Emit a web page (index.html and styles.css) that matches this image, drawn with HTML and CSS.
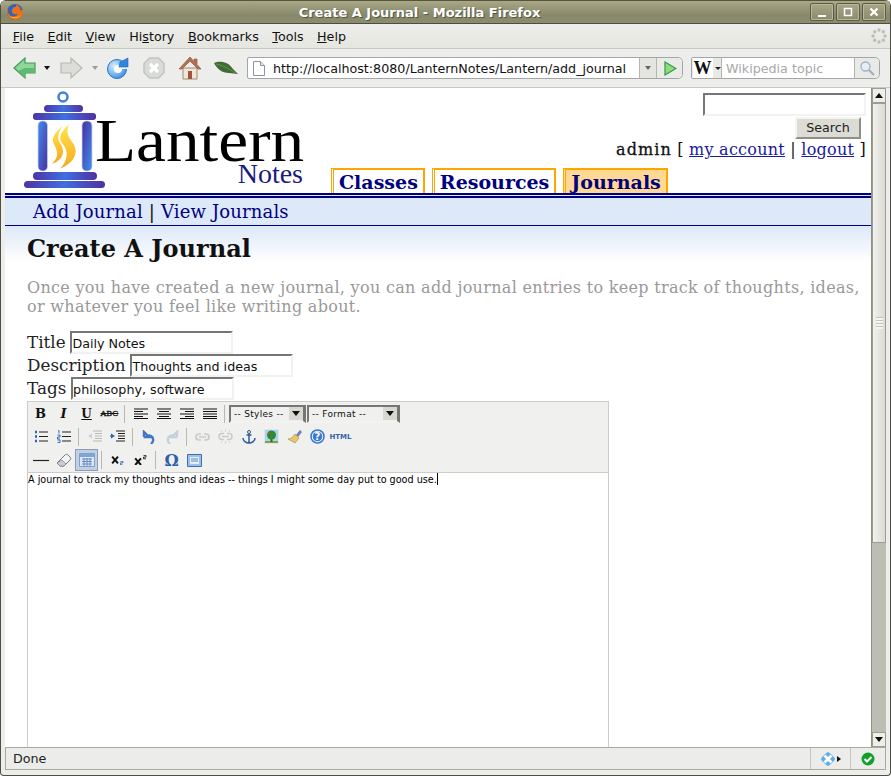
FILE: index.html
```html
<!doctype html>
<html>
<head>
    <meta charset="UTF-8">
    <title>Create A Journal - Mozilla Firefox</title>
    <link rel="stylesheet" href="styles.css">
</head>
<body>
<svg width="0" height="0" class="defs">
    <defs>
        <linearGradient id="lampA" x1="0" y1="0" x2="1" y2="1">
            <stop offset="0" stop-color="#3f8ff0"/><stop offset="1" stop-color="#4a2f9c"/>
        </linearGradient>
        <linearGradient id="lampC" x1="0" y1="0" x2="1" y2="1">
            <stop offset="0" stop-color="#4a2f9c"/><stop offset="1" stop-color="#3f8ff0"/>
        </linearGradient>
        <linearGradient id="lampB" x1="0" y1="0" x2="1" y2="0">
            <stop offset="0" stop-color="#4d35a5"/><stop offset="0.5" stop-color="#3f6fe0"/><stop offset="1" stop-color="#51309f"/>
        </linearGradient>
        <linearGradient id="flame" x1="0" y1="0" x2="0" y2="1">
            <stop offset="0" stop-color="#ffe64d"/><stop offset="1" stop-color="#f7a71e"/>
        </linearGradient>
        <radialGradient id="reloadFill" cx="0.35" cy="0.35" r="0.8">
            <stop offset="0" stop-color="#d8effc"/><stop offset="1" stop-color="#2a83dd"/>
        </radialGradient>
    </defs>
</svg>
<div class="window">
    <div class="titlebar">
        <svg class="ff-logo" width="18" height="18" viewBox="0 0 18 18">
            <circle cx="9" cy="9" r="8" fill="#3a62b0"/>
            <circle cx="10" cy="7.500" r="3.500" fill="#7fa3dc"/>
            <path d="M2 4C0 8 1 13 4.500 15.500c4 2.500 9 1.500 11.500-2 1.500-2.500 1.500-5 .5-7.500-.5 1-1 1.500-2 1.500.3-2.500-1.500-5-4.500-6 1 2-.5 3-2 3.500-1.500.5-2.500 2-2 4 .6 2 3.500 3 6 1.500-1 3-6 4-8.500 1.500C1.500 10 1.500 7 2 4z" fill="#e8721a"/>
            <path d="M3.500 13c3 3.500 9 3 11.500-1-3 2.500-8 3-11.500 1z" fill="#f6b52a"/>
        </svg>
        <div class="title-text">Create A Journal - Mozilla Firefox</div>
        <div class="win-btns">
            <div class="win-btn"><svg width="12" height="12" viewBox="0 0 12 12"><path d="M2 10h8" stroke="#fff" stroke-width="2"/></svg></div>
            <div class="win-btn"><svg width="12" height="12" viewBox="0 0 12 12"><path d="M2.500 2.500h7v7h-7z" fill="none" stroke="#fff" stroke-width="1.500"/></svg></div>
            <div class="win-btn"><svg width="12" height="12" viewBox="0 0 12 12"><path d="M2.500 2.500l7 7M9.500 2.500l-7 7" stroke="#fff" stroke-width="2.200"/></svg></div>
        </div>
    </div>

    <div class="chrome">
        <div class="menubar">
            <span class="menu-item"><u>F</u>ile</span>
            <span class="menu-item"><u>E</u>dit</span>
            <span class="menu-item"><u>V</u>iew</span>
            <span class="menu-item">Hi<u>s</u>tory</span>
            <span class="menu-item"><u>B</u>ookmarks</span>
            <span class="menu-item"><u>T</u>ools</span>
            <span class="menu-item"><u>H</u>elp</span>
            <svg class="throbber" width="16" height="16" viewBox="0 0 16 16" fill="#bdbdb8">
                <circle cx="8" cy="2" r="1.700"/><circle cx="12.300" cy="3.700" r="1.700"/><circle cx="14" cy="8" r="1.700"/><circle cx="12.300" cy="12.300" r="1.700"/><circle cx="8" cy="14" r="1.700"/><circle cx="3.700" cy="12.300" r="1.700"/><circle cx="2" cy="8" r="1.700"/><circle cx="3.700" cy="3.700" r="1.700"/>
            </svg>
        </div>
        <div class="navbar">
            <svg class="nav-icon back" width="24" height="24" viewBox="0 0 24 24"><path d="M1 12L12 2v5h10v10H12v5z" fill="#8fd69a" stroke="#3c9a55" stroke-width="1.200"/><path d="M12 12h10v5H12v5L5 15z" fill="#5fb96f"/></svg>
            <span class="drop-arrow"></span>
            <svg class="nav-icon fwd" width="24" height="24" viewBox="0 0 24 24"><path d="M23 12L12 2v5H2v10h10v5z" fill="#dcdcd8" stroke="#b9b9b4" stroke-width="1.200"/></svg>
            <span class="drop-arrow off"></span>
            <svg class="nav-icon reload" width="24" height="24" viewBox="0 0 24 24"><circle cx="11" cy="13" r="9.500" fill="url(#reloadFill)" stroke="#2a73c8"/><circle cx="12" cy="13" r="4" fill="#fff"/><path d="M13 13h9V11h-9z" fill="#eef3f6"/><path d="M14 6l8-4v9h-9z" fill="#2f86dd" stroke="#1e66b8" stroke-width=".6"/></svg>
            <svg class="nav-icon stop" width="24" height="24" viewBox="0 0 24 24"><path d="M7.500 2h9L22 7.500v9L16.500 22h-9L2 16.500v-9z" fill="#d9dbd8" stroke="#c2c4c0" stroke-width="1.500"/><path d="M8 8l8 8M16 8l-8 8" stroke="#fff" stroke-width="3.200"/></svg>
            <svg class="nav-icon home" width="24" height="24" viewBox="0 0 24 24"><path d="M5 12h14v11H5z" fill="#f1e7d8" stroke="#9d8a74"/><path d="M12 1L1 13h3l8-8 8 8h3l-4-4.500V3h-3v2.500z" fill="#b5704f" stroke="#8a5a45" stroke-width=".7"/><path d="M10 15h4v8h-4z" fill="#a5523c"/></svg>
            <svg class="nav-icon leaf" width="26" height="14" viewBox="0 0 26 14"><path d="M1 2c6-3 15-1 19 6l5 5c-3 0-6-1-9-1C9 12 4 8 1 2z" fill="#3f6b34"/><path d="M3 3c6 1 12 4 19 9" stroke="#7f9f60" stroke-width=".7" fill="none"/></svg>
            <div class="urlbar">
                <svg class="page-icon" width="12" height="15" viewBox="0 0 12 15"><path d="M.5.500h7l4 4v10H.5z" fill="#fff" stroke="#8b93a8"/><path d="M7.500.500v4h4" fill="#dfe3ea" stroke="#8b93a8"/></svg>
                <span class="url-text">http://localhost:8080/LanternNotes/Lantern/add_journal</span>
                <span class="url-drop"><span class="drop-arrow grey"></span></span>
                <span class="url-go"><svg width="14" height="15" viewBox="0 0 14 15"><path d="M2 1l11 6.500L2 14z" fill="#8fdc7c" stroke="#2f9a48" stroke-width="1.200"/></svg></span>
            </div>
            <div class="searchbar">
                <span class="engine"><b class="engine-w">W</b><span class="drop-arrow small"></span></span>
                <span class="engine-text">Wikipedia topic</span>
                <span class="engine-go"><svg width="16" height="16" viewBox="0 0 16 16"><circle cx="6.500" cy="6.500" r="4.500" fill="#e3eef6" stroke="#9fb2c2" stroke-width="1.300"/><path d="M10 10l5 5" stroke="#a9adb1" stroke-width="2.200"/></svg></span>
            </div>
        </div>
    </div>

    <div class="viewport">
        <div class="page">
            <div class="header">
                <div class="logo">
                    <svg class="lamp" width="82" height="98" viewBox="0 0 82 98">
                        <circle cx="39" cy="6" r="4.500" fill="#fff" stroke="#3f7fe0" stroke-width="2.500"/>
                        <rect x="20" y="14" width="39" height="7" rx="3.500" fill="url(#lampB)"/>
                        <rect x="9" y="22" width="63" height="7" rx="3" fill="url(#lampB)"/>
                        <rect x="14" y="30" width="9.500" height="50" rx="4.500" fill="url(#lampA)" stroke="#c9cfe8" stroke-width=".8"/>
                        <rect x="58" y="30" width="10" height="50" rx="4.500" fill="url(#lampC)" stroke="#c9cfe8" stroke-width=".8"/>
                        <g transform="translate(-24,-3) scale(.3333)" fill="url(#flame)">
                            <path d="M190 112C165 135 150 150 165 175 175 195 175 210 155 228 195 215 195 185 180 165 170 150 175 130 190 112z"/>
                            <path d="M207 108C185 130 170 150 190 170 205 190 205 215 180 242 225 225 240 190 215 160 200 140 200 125 207 108z"/>
                        </g>
                        <rect x="9" y="81" width="64" height="8" rx="4" fill="url(#lampB)"/>
                        <rect x="0" y="90" width="81" height="7" rx="3.500" fill="url(#lampB)"/>
                    </svg>
                    <div class="wordmark">
                        <div class="word-lantern">Lantern</div>
                        <div class="word-notes">Notes</div>
                    </div>
                </div>
                <div class="header-right">
                    <div class="site-search">
                        <input class="field search-field" type="text">
                        <button class="search-btn">Search</button>
                    </div>
                    <div class="userline"><b>admin</b> [ <a href="#">my account</a> | <a href="#">logout</a> ]</div>
                    <div class="tabs">
                        <a class="tab" href="#">Classes</a>
                        <a class="tab" href="#">Resources</a>
                        <a class="tab active" href="#">Journals</a>
                    </div>
                </div>
            </div>
            <div class="subnav"><a href="#">Add Journal</a> <span class="pipe">|</span> <a href="#">View Journals</a></div>
            <div class="content">
                <h1 class="page-title">Create A Journal</h1>
                <p class="intro">Once you have created a new journal, you can add journal entries to keep track of thoughts, ideas, or whatever you feel like writing about.</p>
                <div class="form-row">Title <input class="field txt" type="text" value="Daily Notes"></div>
                <div class="form-row">Description <input class="field txt" type="text" value="Thoughts and ideas"></div>
                <div class="form-row">Tags <input class="field txt" type="text" value="philosophy, software"></div>
                <div class="editor">
                    <div class="ed-toolbar">
                        <div class="ed-row">
                            <span class="ed-btn t-b">B</span>
                            <span class="ed-btn t-i">I</span>
                            <span class="ed-btn t-u">U</span>
                            <span class="ed-btn t-s">ABC</span>
                            <span class="ed-sep"></span>
                            <span class="ed-btn"><svg width="14" height="11" viewBox="0 0 14 11"><path d="M0 1h14M0 3.500h9M0 6h14M0 8.500h9M0 10.500h14" stroke="#111"/></svg></span>
                            <span class="ed-btn"><svg width="14" height="11" viewBox="0 0 14 11"><path d="M0 1h14M2 3.500h10M0 6h14M2 8.500h10M0 10.500h14" stroke="#111"/></svg></span>
                            <span class="ed-btn"><svg width="14" height="11" viewBox="0 0 14 11"><path d="M0 1h14M5 3.500h9M0 6h14M5 8.500h9M0 10.500h14" stroke="#111"/></svg></span>
                            <span class="ed-btn"><svg width="14" height="11" viewBox="0 0 14 11"><path d="M0 1h14M0 3.500h14M0 6h14M0 8.500h14M0 10.500h14" stroke="#111"/></svg></span>
                            <span class="ed-sep"></span>
                            <span class="ed-select w-styles"><span>-- Styles --</span><i></i></span>
                            <span class="ed-select w-format"><span>-- Format --</span><i></i></span>
                        </div>
                        <div class="ed-row">
                            <span class="ed-btn"><svg width="14" height="13" viewBox="0 0 14 13"><path d="M5 2h9M5 6.500h9M5 11h9" stroke="#222"/><path d="M1 2h2M1 6.500h2M1 11h2" stroke="#2b5fb8" stroke-width="2.400"/></svg></span>
                            <span class="ed-btn"><svg width="14" height="13" viewBox="0 0 14 13"><path d="M5 2h9M5 6.500h9M5 11h9" stroke="#222"/><path d="M1 1l1-.5v3M.5 5h2.500v2h-2.500v2h2.500M.5 10h2.500v2.500h-2.500" stroke="#2b5fb8" fill="none" stroke-width=".9"/></svg></span>
                            <span class="ed-sep"></span>
                            <span class="ed-btn"><svg width="15" height="13" viewBox="0 0 15 13"><path d="M6 1h9M8 3.500h7M8 6h7M8 8.500h7M6 11h9" stroke="#b9bbb8"/><path d="M5 3.500L1 6l4 2.500z" fill="#c3d3e6"/></svg></span>
                            <span class="ed-btn"><svg width="15" height="13" viewBox="0 0 15 13"><path d="M6 1h9M8 3.500h7M8 6h7M8 8.500h7M6 11h9" stroke="#222"/><path d="M1 3.500L5 6 1 8.500z" fill="#2b5fb8"/><path d="M0 6h3" stroke="#2b5fb8"/></svg></span>
                            <span class="ed-sep"></span>
                            <span class="ed-btn"><svg width="14" height="14" viewBox="0 0 14 14"><path d="M2 7V2l5 5H4c3-3 8-1 7 4-.3 1-1 2-2 3" fill="none" stroke="#3d76c2" stroke-width="2.400"/></svg></span>
                            <span class="ed-btn"><svg width="14" height="14" viewBox="0 0 14 14"><path d="M12 7V2L7 7h3C7 4 2 6 3 11c.3 1 1 2 2 3" fill="none" stroke="#c4d0de" stroke-width="2.400"/></svg></span>
                            <span class="ed-sep"></span>
                            <span class="ed-btn"><svg width="15" height="10" viewBox="0 0 15 10"><path d="M6 2H4a3 3 0 000 6h2M9 2h2a3 3 0 010 6H9M4 5h7" fill="none" stroke="#c9cbc9" stroke-width="1.700"/></svg></span>
                            <span class="ed-btn"><svg width="15" height="15" viewBox="0 0 15 15"><path d="M6 4.500H4a3 3 0 000 6h2M9 4.500h2a3 3 0 010 6H9M4 7.500h7" fill="none" stroke="#c9cbc9" stroke-width="1.500"/><path d="M7.500 0v3M3 1l1 2M12 1l-1 2M7.500 12v3M3 14l1-2M12 14l-1-2" stroke="#d4d6d4"/></svg></span>
                            <span class="ed-btn"><svg width="14" height="14" viewBox="0 0 14 14"><circle cx="7" cy="2" r="1.500" fill="none" stroke="#2c5b9c"/><path d="M7 3.500V13M4.500 5h5M1 8c0 3 3 5 6 5s6-2 6-5" fill="none" stroke="#2c5b9c" stroke-width="1.500"/></svg></span>
                            <span class="ed-btn"><svg width="15" height="15" viewBox="0 0 15 15"><path d="M.5.500h14v14H.5z" fill="#a9d3f5" stroke="#e4e6e4"/><path d="M1 12h13v2H1z" fill="#6fae3c"/><path d="M6.500 9h2v4h-2z" fill="#6d4a26"/><circle cx="7.500" cy="6" r="4.500" fill="#2f8a2f"/><circle cx="5" cy="4.500" r="1" fill="#d8402c"/></svg></span>
                            <span class="ed-btn"><svg width="16" height="15" viewBox="0 0 16 15"><path d="M9 6l4-5 2 2-4 5z" fill="#6f7fb8"/><path d="M8 5l4 4-4 5-7-4c3 0 5-2 7-5z" fill="#e8c66a" stroke="#a58a3c" stroke-width=".6"/></svg></span>
                            <span class="ed-btn"><svg width="15" height="15" viewBox="0 0 15 15"><circle cx="7.500" cy="7.500" r="6.500" fill="#fff" stroke="#3a78d2" stroke-width="1.600"/><circle cx="7.500" cy="7.500" r="4.800" fill="#3a78d2"/><text x="7.500" y="11" class="help-q">?</text></svg></span>
                            <span class="ed-btn t-html">HTML</span>
                        </div>
                        <div class="ed-row">
                            <span class="ed-btn"><svg width="16" height="3" viewBox="0 0 16 3"><path d="M0 1.500h16" stroke="#222" stroke-width="1.200"/></svg></span>
                            <span class="ed-btn"><svg width="16" height="14" viewBox="0 0 16 14"><path d="M1 10l8-8c1-1 2-1 3 0l2 2c1 1 1 2 0 3l-6 6H4z" fill="#f2f3f3" stroke="#767c82"/><path d="M1 10l3 3h4l2-2-4-4z" fill="#c9ced4" stroke="#767c82" stroke-width=".7"/></svg></span>
                            <span class="ed-btn active"><svg width="16" height="14" viewBox="0 0 16 14"><path d="M.5.500h15v13H.5z" fill="#dbe7f6" stroke="#7fa1cf"/><path d="M1 1h14v3H1z" fill="#7fa5d8"/><path d="M3 6h10M3 8.500h10M3 11h10M5 5v8M8 5v8M11 5v8" stroke="#5f87bd" stroke-width=".9"/></svg></span>
                            <span class="ed-sep"></span>
                            <span class="ed-btn"><svg width="14" height="10" viewBox="0 0 16 12"><path d="M1 2l7 8M8 2l-7 8" stroke="#111" stroke-width="2.400"/><path d="M11 8h3v1.500h-3V12h3" stroke="#2b5fb8" fill="none"/></svg></span>
                            <span class="ed-btn"><svg width="14" height="10" viewBox="0 0 16 12"><path d="M1 4l7 8M8 4l-7 8" stroke="#111" stroke-width="2.400"/><path d="M11 .500h3V2.500h-3v2h3" stroke="#111" fill="none"/></svg></span>
                            <span class="ed-sep"></span>
                            <span class="ed-btn t-omega">&Omega;</span>
                            <span class="ed-btn"><svg width="15" height="13" viewBox="0 0 15 13"><path d="M.5.500h14v12H.5z" fill="#9cc0ea" stroke="#3f6fae"/><path d="M3 3h9v7H3z" fill="#e4eefa"/><path d="M4 5h7M4 7h7" stroke="#3f6fae" stroke-width=".8"/></svg></span>
                        </div>
                    </div>
                    <div class="ed-body">A journal to track my thoughts and ideas -- things I might some day put to good use.<span class="caret"></span></div>
                </div>
            </div>
        </div>
        <div class="scrollbar">
            <span class="sb-btn"><i class="up"></i></span>
            <span class="sb-thumb"><span class="grip"></span></span>
            <span class="sb-track"></span>
            <span class="sb-btn"><i class="down"></i></span>
        </div>
    </div>

    <div class="statusbar">
        <span class="st-main">Done</span>
        <span class="st-cell st-mid">
            <svg width="16" height="14" viewBox="0 0 16 14"><path d="M8 0c1 0 7 5.500 7 7s-6 7-7 7-7-5.500-7-7 6-7 7-7z" fill="#63aee8"/><path d="M4.500 3.500l7 7M11.500 3.500l-7 7" stroke="#fff" stroke-width="2.600"/></svg>
            <i class="st-arrow"></i>
        </span>
        <span class="st-cell st-end">
            <svg width="14" height="14" viewBox="0 0 14 14"><circle cx="7" cy="7" r="6.500" fill="#12a02c"/><path d="M3.500 7l2.500 2.500L10.500 5" fill="none" stroke="#fff" stroke-width="2"/></svg>
        </span>
    </div>
</div>
</body>
</html>
```

FILE: styles.css
```css
* {
    box-sizing: border-box;
}

html, body {
    margin: 0;
    padding: 0;
    height: 776px;
    overflow: hidden;
    background: #fff;
}

body {
    font-family: "DejaVu Sans", sans-serif;
}

.defs {
    position: absolute;
}

.window {
    height: 776px;
    display: flex;
    flex-direction: column;
    background: #edeeeb;
    border: 1px solid #4e4e44;
    border-top: 0;
    border-radius: 6px 6px 4px 4px;
    overflow: hidden;
}

/* title bar */
.titlebar {
    height: 24px;
    flex: none;
    display: flex;
    align-items: center;
    background: linear-gradient(#a9a985 0, #98987a 30%, #88886a 65%, #8c8c6e 100%);
    border-top: 1px solid #55553f;
    border-bottom: 1px solid #4e4e40;
}

.ff-logo {
    margin-left: 5px;
}

.title-text {
    flex: 1;
    text-align: center;
    color: #fff;
    font-weight: bold;
    font-size: 13px;
    text-shadow: 1px 1px 0 #55553f;
    padding-left: 5px;
}

.win-btns {
    display: flex;
    gap: 2px;
    margin-right: 4px;
}

.win-btn {
    width: 24px;
    height: 18px;
    border: 1px solid #5b5b49;
    border-radius: 2px;
    background: linear-gradient(#a8a888, #8a8a6c);
    box-shadow: inset 0 0 0 1px #b7b79a;
    display: flex;
    align-items: center;
    justify-content: center;
}

/* browser chrome */
.chrome {
    flex: none;
    background: #edeeeb;
}

.menubar {
    height: 25px;
    padding-left: 5px;
    display: flex;
    align-items: center;
    background: linear-gradient(#edeeec, #e6e6e0);
    border-bottom: 1px solid #c9cac2;
    font-size: 12.700px;
    color: #111;
}

.menu-item {
    padding: 0 6.750px;
}

.throbber {
    margin-left: auto;
    margin-right: 3px;
}

.navbar {
    height: 39px;
    display: flex;
    align-items: center;
    padding-left: 12px;
    border-bottom: 1px solid #c9cac2;
    background: #edeeeb;
}

.nav-icon {
    flex: none;
}

.back { margin-right: 7px; }
.fwd { margin: 0 0 0 9px; }
.reload { margin-left: 8px; }
.stop { margin-left: 12px; }
.home { margin-left: 12px; }
.leaf { margin-left: 11px; }

.drop-arrow {
    display: inline-block;
    width: 0;
    height: 0;
    border: 3.500px solid transparent;
    border-top: 4px solid #111;
    border-bottom: 0;
    flex: none;
}

.drop-arrow.off {
    border-top-color: #9c9c98;
    margin-left: 9px;
}

.drop-arrow.grey {
    border-top-color: #666;
}

.drop-arrow.small {
    border-width: 3px;
    border-bottom: 0;
    margin-left: 2px;
    border-top-color: #222;
}

.urlbar {
    margin-left: 8px;
    width: 436px;
    height: 22px;
    flex: none;
    display: flex;
    align-items: center;
    background: #fff;
    border: 1px solid #a2a6a8;
    border-radius: 2px 5px 5px 2px;
    font-size: 12.700px;
    color: #111;
}

.page-icon {
    margin-left: 5px;
    flex: none;
}

.url-text {
    flex: 1;
    margin-left: 8px;
    white-space: nowrap;
    overflow: hidden;
}

.url-drop {
    width: 18px;
    height: 100%;
    background: #e4e5e1;
    border-left: 1px solid #b4b6b2;
    border-right: 1px solid #b4b6b2;
    display: flex;
    align-items: center;
    justify-content: center;
}

.url-go {
    width: 25px;
    height: 100%;
    background: #eaebe7;
    border-radius: 0 5px 5px 0;
    display: flex;
    align-items: center;
    justify-content: center;
}

.searchbar {
    margin-left: 8px;
    width: 189px;
    height: 22px;
    flex: none;
    display: flex;
    align-items: center;
    background: #fff;
    border: 1px solid #a2a6a8;
    border-radius: 2px 5px 5px 2px;
    font-size: 12.700px;
}

.engine {
    width: 30px;
    height: 100%;
    display: flex;
    align-items: center;
    justify-content: center;
    background: #e9eae6;
    border-right: 1px solid #b4b6b2;
}

.engine-w {
    font-family: "Liberation Serif", serif;
    font-size: 18px;
    color: #111;
    background: #fff;
    line-height: 20px;
    padding: 0 1px;
}

.engine-text {
    flex: 1;
    margin-left: 4px;
    color: #a8a8a8;
    white-space: nowrap;
}

.engine-go {
    width: 25px;
    height: 100%;
    background: #e9eae6;
    border-left: 1px solid #b4b6b2;
    border-radius: 0 5px 5px 0;
    display: flex;
    align-items: center;
    justify-content: center;
}

/* page area */
.viewport {
    height: 659px;
    flex: none;
    display: flex;
    margin: 0 4px;
    background: #fff;
    overflow: hidden;
}

.page {
    flex: 1;
    min-width: 0;
    overflow: hidden;
    font-family: "DejaVu Serif", serif;
    color: #111;
}

.scrollbar {
    width: 15px;
    flex: none;
    display: flex;
    flex-direction: column;
    background: #bcbdb3;
    border-left: 1px solid #8f907f;
}

.sb-btn {
    height: 15px;
    flex: none;
    background: #eeeeea;
    border: 1px solid #9c9d90;
    display: flex;
    align-items: center;
    justify-content: center;
}

.sb-btn i {
    width: 0;
    height: 0;
    border: 4px solid transparent;
}

.sb-btn .up {
    border-top: 0;
    border-bottom: 5px solid #111;
}

.sb-btn .down {
    border-bottom: 0;
    border-top: 5px solid #111;
}

.sb-thumb {
    height: 440px;
    flex: none;
    background: linear-gradient(90deg, #f1f1ee, #dcdcd5);
    border: 1px solid #9c9d90;
    display: flex;
    align-items: center;
    justify-content: center;
}

.grip {
    width: 7px;
    height: 12px;
    background: repeating-linear-gradient(#c3c4ba 0 1px, #f4f4f2 1px 3px);
}

.sb-track {
    flex: 1;
    background: #bcbdb3;
}

.header {
    height: 105px;
    display: flex;
    background: #fff;
}

.logo {
    width: 326px;
    flex: none;
    display: flex;
    align-items: flex-start;
    padding: 3px 0 0 19px;
}

.lamp {
    flex: none;
}

.wordmark {
    margin-left: -11px;
    margin-top: 24px;
    width: 208px;
}

.word-lantern {
    font-family: "Liberation Serif", serif;
    font-size: 62px;
    line-height: 50px;
    color: #000;
    white-space: nowrap;
    transform: scaleX(1.085);
    transform-origin: left center;
}

.word-notes {
    font-family: "Liberation Serif", serif;
    font-size: 28px;
    line-height: 22px;
    margin-top: -2px;
    color: #1a1a80;
    text-align: right;
}

.header-right {
    flex: 1;
    display: flex;
    flex-direction: column;
    min-width: 0;
}

.site-search {
    display: flex;
    flex-direction: column;
    align-items: flex-end;
    padding: 5px 5px 0 0;
}

.field {
    border: 2px solid;
    border-color: #767676 #f2f2f0 #f2f2f0 #767676;
    background: #fff;
    outline: 0;
    margin: 0;
}

.search-field {
    width: 163px;
    height: 23px;
}

.search-btn {
    width: 66px;
    height: 22px;
    margin: 1px 5px 0 0;
    padding: 0 0 2px;
    font-family: "DejaVu Sans", sans-serif;
    font-size: 12.700px;
    color: #222;
    background: #dcdcd5;
    border: 2px solid;
    border-color: #f4f4f2 #8f8f88 #8f8f88 #f4f4f2;
}

.userline {
    margin-top: 1px;
    text-align: right;
    font-size: 16px;
    line-height: 20px;
    padding-right: 5px;
    white-space: nowrap;
    letter-spacing: .25px;
}

.userline b {
    font-weight: 500;
    letter-spacing: 1.100px;
    -webkit-text-stroke: .3px #111;
}

.userline a {
    color: #1a1a9c;
}

.tabs {
    margin-top: auto;
    display: flex;
    gap: 7px;
    align-items: flex-end;
}

.tab {
    height: 25px;
    padding: 0 5px;
    border: solid orange;
    border-width: 2px 2px 0 3px;
    border-left-style: double;
    background: #fff;
    color: #000080;
    font-weight: bold;
    font-size: 19px;
    line-height: 24px;
    text-decoration: none;
}

.tab.active {
    background: #ffd993;
}

.subnav {
    height: 33px;
    border-top: 5px double #000080;
    border-bottom: 1px solid #000080;
    background: #dde8f8;
    padding-left: 28px;
    font-size: 18px;
    line-height: 27px;
    letter-spacing: .16px;
    white-space: nowrap;
}

.subnav a {
    color: #000080;
    text-decoration: none;
}

.pipe {
    color: #111;
}

.content {
    background: linear-gradient(#dde8f8 0, #fff 36px);
    padding: 0 10px 0 22px;
    height: 520px;
}

.page-title {
    margin: 0;
    padding-top: 8px;
    font-size: 24px;
    line-height: 29px;
    color: #111;
}

.intro {
    margin: 15px 0;
    font-size: 16px;
    line-height: 19px;
    letter-spacing: .31px;
    color: #999;
}

.form-row {
    font-size: 16.800px;
    line-height: 23px;
    height: 23px;
    color: #222;
    white-space: nowrap;
}

.txt {
    font-family: "DejaVu Sans", sans-serif;
    font-size: 12.700px;
    width: 163px;
    height: 23px;
    padding: 1px 0 0 0;
    vertical-align: top;
    color: #111;
    margin-left: -.5px;
}

.editor {
    width: 582px;
    margin-top: 1px;
    border: 1px solid #ccc;
    height: 400px;
}

.ed-toolbar {
    height: 71px;
    padding: 0 0 0 1px;
    background: #f0f0ee;
    border-bottom: 1px solid #ccc;
    display: flex;
    flex-direction: column;
}

.ed-row {
    height: 23.300px;
    display: flex;
    align-items: center;
}

.ed-btn {
    width: 23px;
    height: 22px;
    flex: none;
    display: flex;
    align-items: center;
    justify-content: center;
}

.ed-btn.active {
    background: #c2cfe0;
    border: 1px solid #8a9cb8;
}

.ed-sep {
    width: 1px;
    height: 18px;
    background: #b8b8b2;
    margin: 0 4px 0 3px;
    flex: none;
}

.t-b, .t-i, .t-u, .t-s, .t-omega {
    font-family: "DejaVu Serif", serif;
    font-weight: bold;
    color: #111;
    font-size: 13px;
}

.t-i { font-style: italic; }
.t-u { text-decoration: underline; font-size: 12px; }
.t-s { font-size: 8px; text-decoration: line-through; font-weight: normal; -webkit-text-stroke: .3px #111; }
.t-omega { color: #2c5ea8; font-size: 16px; }

.t-html {
    font-family: "DejaVu Sans", sans-serif;
    font-size: 7px;
    font-weight: bold;
    color: #3763ad;
}

.help-q {
    font-family: "DejaVu Sans", sans-serif;
    font-size: 10px;
    font-weight: bold;
    fill: #fff;
    text-anchor: middle;
}

.ed-select {
    height: 18px;
    margin-right: 1px;
    display: flex;
    align-items: center;
    justify-content: space-between;
    background: #f0f0ee;
    border: 2px solid;
    border-color: #767676 #767676 #f2f2f0 #767676;
    border-right-width: 3px;
    font-family: "DejaVu Sans", sans-serif;
    font-size: 9px;
    letter-spacing: .3px;
    padding-left: 3px;
    color: #111;
}

.ed-select i {
    width: 14px;
    height: 13px;
    background: #d8d8d0;
    display: block;
}

.ed-select i::after {
    content: "";
    display: block;
    width: 0;
    border: 4px solid transparent;
    border-top: 5px solid #111;
    border-bottom: 0;
    margin: 4px 3px;
}

.w-styles { width: 77px; }
.w-format { width: 93px; }

.ed-body {
    font-family: "DejaVu Sans", sans-serif;
    font-size: 9.650px;
    line-height: 14px;
    color: #000;
    background: #fff;
}

.caret {
    display: inline-block;
    width: 1px;
    height: 12px;
    background: #000;
    vertical-align: -2px;
}

/* status bar */
.statusbar {
    height: 23px;
    flex: none;
    margin: 0 4px;
    display: flex;
    align-items: stretch;
    font-size: 12.700px;
    color: #222;
    background: #ecedea;
    border-top: 1px solid #a9aa9c;
    border-bottom: 1px solid #a9aa9c;
}

.st-main {
    flex: 1;
    padding-left: 7px;
    line-height: 21px;
    border-left: 1px solid #a9aa9c;
}

.st-cell {
    display: flex;
    align-items: center;
    justify-content: center;
    border-left: 1px solid #c4c5ba;
}

.st-mid {
    width: 40px;
}

.st-arrow {
    width: 0;
    border: 3.500px solid transparent;
    border-left: 4px solid #111;
    border-right: 0;
    margin-left: 1px;
}

.st-end {
    width: 36px;
    border-right: 1px solid #a9aa9c;
}
```
